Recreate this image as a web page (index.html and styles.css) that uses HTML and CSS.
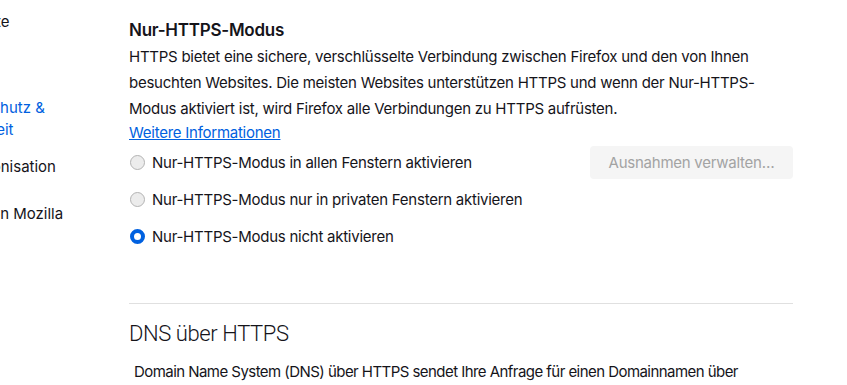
FILE: index.html
```html
<!DOCTYPE html>
<html>
  <head>
    <title>Einstellungen</title>
    <link rel="stylesheet" href="styles.css">
  </head>
  <body>
    <div class="page">
      <nav class="sidebar">
        <ul class="nav-list">
          <li class="nav-item">Startseite</li>
          <li class="nav-item">Suche</li>
          <li class="nav-item selected">Datenschutz &amp; Sicherheit</li>
          <li class="nav-item">Synchronisation</li>
          <li class="nav-item">Mehr von Mozilla</li>
        </ul>
      </nav>

      <main class="content">
        <section class="section">
          <h2 class="section-title">Nur-HTTPS-Modus</h2>
          <p class="description">
            HTTPS bietet eine sichere, verschlüsselte Verbindung zwischen Firefox und den von Ihnen<br>
            besuchten Websites. Die meisten Websites unterstützen HTTPS und wenn der Nur-HTTPS-<br>
            Modus aktiviert ist, wird Firefox alle Verbindungen zu HTTPS aufrüsten.
          </p>
          <a class="learn-more" href="#">Weitere Informationen</a>

          <div class="options">
            <div class="option-row">
              <label class="radio">
                <span class="radio-dot"></span>
                Nur-HTTPS-Modus in allen Fenstern aktivieren
              </label>
              <button class="button" disabled>Ausnahmen verwalten…</button>
            </div>
            <div class="option-row">
              <label class="radio">
                <span class="radio-dot"></span>
                Nur-HTTPS-Modus nur in privaten Fenstern aktivieren
              </label>
            </div>
            <div class="option-row">
              <label class="radio">
                <span class="radio-dot checked"></span>
                Nur-HTTPS-Modus nicht aktivieren
              </label>
            </div>
          </div>
        </section>

        <hr class="separator">

        <section class="section">
          <h2 class="section-title light">DNS über HTTPS</h2>
          <p class="description dns">
            Domain Name System (DNS) über HTTPS sendet Ihre Anfrage für einen Domainnamen über<br>
            eine verschlüsselte Verbindung.
          </p>
        </section>
      </main>
    </div>
  </body>
</html>
```

FILE: styles.css
```css
body {
  margin: 0;
  background: #fff;
  color: #15141a;
  font-family: Inter, "Liberation Sans", Arial, sans-serif;
  letter-spacing: -0.25px;
  overflow: hidden;
}

.page {
  display: flex;
  height: 385px;
}

/* Seitenleiste, links abgeschnitten */
.sidebar {
  width: 129px;
  flex-shrink: 0;
  overflow: hidden;
}

.nav-list {
  list-style: none;
  margin: 0 0 0 -58px;
  padding: 11px 0 0;
  width: 170px;
  font-size: 15px;
  letter-spacing: 0;
}

.nav-item {
  line-height: 22px;
  margin-bottom: 20px;
  white-space: nowrap;
}

.nav-item:nth-child(2) {
  margin-bottom: 22px;
}

.nav-item.selected {
  color: #0061e0;
  margin-bottom: 15px;
  white-space: normal;
  width: 120px;
}

.nav-item.selected + .nav-item {
  margin-bottom: 25px;
}

/* Inhalt */
.content {
  width: 664px;
  padding-top: 20px;
}

.section-title {
  margin: 0;
  font-size: 17px;
  line-height: 20px;
  font-weight: 600;
}

.section-title.light {
  font-family: Roboto, "Liberation Sans", sans-serif;
  font-weight: 300;
  font-size: 22px;
  line-height: 28px;
  letter-spacing: -0.4px;
}

.description {
  margin: 4px 0 0;
  font-size: 15px;
  line-height: 26px;
  white-space: nowrap;
}

.description.dns {
  margin-top: 11px;
  padding-left: 5px;
  letter-spacing: -0.55px;
}

.learn-more {
  display: inline-block;
  font-size: 15px;
  line-height: 20px;
  color: #0061e0;
}

.options {
  margin-top: 1px;
}

.option-row {
  display: flex;
  align-items: center;
  justify-content: space-between;
  height: 37px;
}

.radio {
  display: flex;
  align-items: center;
  gap: 7px;
  font-size: 15px;
}

.radio-dot {
  width: 15px;
  height: 15px;
  box-sizing: border-box;
  border: 1px solid #b3b3b3;
  border-radius: 50%;
  background: #ececec;
  margin-left: 1px;
}

.radio-dot.checked {
  border: 4px solid #0061e0;
  background: #fff;
}

.button {
  width: 203px;
  height: 33px;
  border: none;
  border-radius: 4px;
  background: #f5f5f5;
  color: #a3a3a3;
  font-family: inherit;
  font-size: 15px;
  letter-spacing: inherit;
}

.separator {
  margin: 48px 0 16px;
  border: none;
  border-top: 1px solid #e0e0e0;
}
```
